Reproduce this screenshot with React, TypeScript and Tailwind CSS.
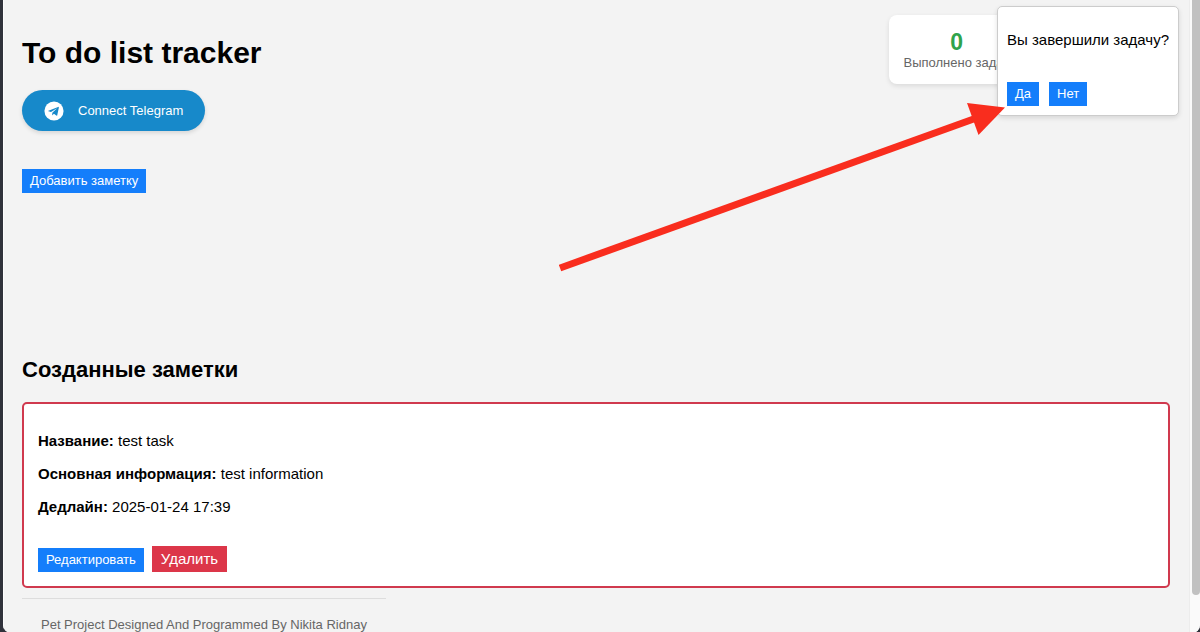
import { useState } from "react";

type Note = {
  id: number;
  title: string;
  info: string;
  deadline: string;
};

const initialNotes: Note[] = [
  {
    id: 1,
    title: "test task",
    info: "test information",
    deadline: "2025-01-24 17:39",
  },
];

const TelegramIcon = () => (
  <svg viewBox="0 0 24 24" className="w-5 h-5" aria-hidden="true">
    <circle cx="12" cy="12" r="11.5" fill="#fff" />
    <path
      fill="#1789ca"
      d="M5.4 11.6 16.9 7.1c.6-.2 1 .1.9.9l-1.9 9c-.1.7-.6.8-1.1.5l-2.9-2.2-1.5 1.4c-.2.2-.4.3-.6.3l.2-3 5.4-4.9c.2-.2 0-.3-.3-.1l-6.7 4.2-2.9-.9c-.6-.2-.6-.6-.1-.7z"
    />
  </svg>
);

const Button = ({
  children,
  onClick,
}: {
  children: string;
  onClick?: () => void;
}) => (
  <button
    onClick={onClick}
    className="h-6 px-2 bg-[#147efb] text-white text-[13px] leading-4"
  >
    {children}
  </button>
);

const NoteField = ({ label, value }: { label: string; value: string }) => (
  <p>
    <strong>{label}:</strong> {value}
  </p>
);

const NoteCard = ({ note, onDelete }: { note: Note; onDelete: () => void }) => (
  <li className="px-[14px] pt-7 pb-[14px] bg-white border-2 border-[#d0394e] rounded-[5px]">
    <div className="flex flex-col gap-[15px] text-[15px] leading-[18px]">
      <NoteField label="Название" value={note.title} />
      <NoteField label="Основная информация" value={note.info} />
      <NoteField label="Дедлайн" value={note.deadline} />
    </div>
    <div className="flex items-end gap-2 mt-[30px]">
      <Button>Редактировать</Button>
      <button
        onClick={onDelete}
        className="h-[26px] px-[9px] bg-[#dc3649] text-white text-[15px] leading-[18px]"
      >
        Удалить
      </button>
    </div>
  </li>
);

const CompletedCounter = ({ count }: { count: number }) => (
  <div className="absolute top-[15px] right-[165px] px-[14px] pt-[14px] pb-[13px] bg-white rounded-lg shadow-[0_2px_5px_rgba(0,0,0,0.1)] text-center">
    <div className="text-[23px] leading-[26px] font-bold text-[#2fa34c]">
      {count}
    </div>
    <div className="text-[13px] leading-4 text-[#666]">Выполнено задач</div>
  </div>
);

const CompletePopup = ({
  onYes,
  onNo,
}: {
  onYes: () => void;
  onNo: () => void;
}) => (
  <div
    role="dialog"
    aria-labelledby="complete-question"
    className="absolute top-[6px] right-[10px] px-[9px] pt-6 pb-[9px] bg-white border border-[#ccc] rounded-[5px] shadow-[0_2px_5px_rgba(0,0,0,0.12)]"
  >
    <p id="complete-question" className="text-[15px] leading-[18px]">
      Вы завершили задачу?
    </p>
    <div className="flex gap-[10px] mt-[33px]">
      <Button onClick={onYes}>Да</Button>
      <Button onClick={onNo}>Нет</Button>
    </div>
  </div>
);

const Arrow = () => (
  <svg
    width="446"
    height="170"
    viewBox="0 0 446 170"
    className="absolute top-[102px] right-[184px] pointer-events-none"
    aria-hidden="true"
  >
    <path d="M1 166 416 16.500" stroke="#f92d1e" strokeWidth="7" />
    <path d="M408 1 446 5.500 419.500 33Z" fill="#f92d1e" />
  </svg>
);

export default function App() {
  const [notes, setNotes] = useState(initialNotes);
  const [completed, setCompleted] = useState(0);
  const [popupOpen, setPopupOpen] = useState(true);

  const handleYes = () => {
    setCompleted((prev) => prev + 1);
    setPopupOpen(false);
  };

  const handleDelete = (id: number) => {
    setNotes((prevNotes) => prevNotes.filter((note) => note.id !== id));
  };

  return (
    <div className="min-h-screen pl-[3px] bg-[#30323b] font-['Liberation_Sans',Arial,sans-serif] text-black">
      <div className="flex min-h-screen bg-[#f3f3f3] rounded-b-lg overflow-hidden">
        <div className="relative flex-1 min-w-0 pl-[18px] pr-[19px] pt-[35px] border-l border-[#fcfcfc]">
          <h1 className="text-[30px] leading-9 font-bold">
            To do list tracker
          </h1>
          <a
            href="#telegram"
            className="inline-flex items-center gap-[14px] h-[41px] mt-[19px] px-[22px] bg-[#1789ca] rounded-full text-white text-[13px] leading-4 shadow-[0_2px_4px_rgba(0,0,0,0.12)]"
          >
            <TelegramIcon />
            Connect Telegram
          </a>
          <div className="flex mt-[38px]">
            <Button>Добавить заметку</Button>
          </div>

          <h2 className="mt-[163px] text-[22px] leading-7 font-bold">
            Созданные заметки
          </h2>
          <ul className="flex flex-col gap-[10px] mt-[18px]">
            {notes.map((note) => (
              <NoteCard
                key={`note-${note.id}`}
                note={note}
                onDelete={() => handleDelete(note.id)}
              />
            ))}
          </ul>

          <footer className="w-fit mt-[10px] px-[19px] pt-[17px] border-t border-[#ddd] text-[13px] leading-[17px] text-[#666]">
            Pet Project Designed And Programmed By Nikita Ridnay
          </footer>

          <CompletedCounter count={completed} />
          {popupOpen && (
            <CompletePopup
              onYes={handleYes}
              onNo={() => setPopupOpen(false)}
            />
          )}
          <Arrow />
        </div>

        {/* scrollbar track */}
        <div className="flex flex-col w-[11px] pl-[2px] pb-[38px] bg-[#fafafa] border-l border-[#ececec]">
          <div className="flex-1 bg-[#c1c1c1] rounded-b-full" />
        </div>
      </div>
    </div>
  );
}
